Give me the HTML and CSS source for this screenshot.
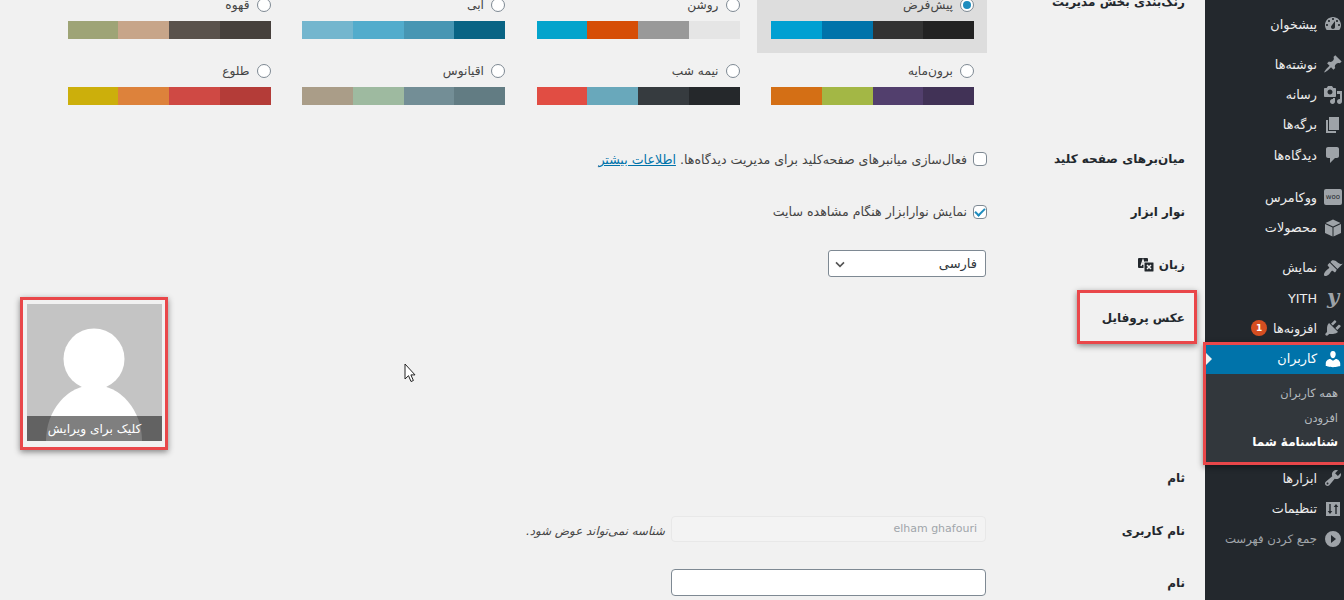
FILE: index.html
```html
<!DOCTYPE html>
<html lang="fa" dir="rtl">
	<head>
		<meta charset="UTF-8" />
		<meta name="viewport" content="width=device-width, initial-scale=1.0" />
		<title>شناسنامهٔ شما</title>
		<link rel="stylesheet" href="styles.css">
	</head>
	<body>
		<div class="admin">
			<nav class="sidebar">
				<a class="menu-item"><svg class="icon" viewBox="0 0 20 20"><path fill-rule="evenodd" d="M3.76 16h12.48c1.1-1.37 1.76-3.11 1.76-5 0-4.42-3.58-8-8-8s-8 3.580-8 8c0 1.89.66 3.63 1.76 5zM10 4c.55 0 1 .45 1 1s-.45 1-1 1-1-.45-1-1 .45-1 1-1zM6 6c.55 0 1 .45 1 1s-.45 1-1 1-1-.45-1-1 .45-1 1-1zm8 0c.55 0 1 .45 1 1s-.45 1-1 1-1-.45-1-1 .45-1 1-1zm-5.37 5.55L12 7v6c0 1.1-.9 2-2 2s-2-.9-2-2c0-.57.24-1.08.63-1.45zM4 10c.55 0 1 .45 1 1s-.45 1-1 1-1-.45-1-1 .45-1 1-1zm12 0c.55 0 1 .45 1 1s-.45 1-1 1-1-.45-1-1 .45-1 1-1z"/></svg><span>پیشخوان</span></a>

				<a class="menu-item group-start"><svg class="icon" viewBox="0 0 20 20"><path d="M10.44 3.02l1.82-1.82 6.36 6.35-1.83 1.82c-1.05-.68-2.48-.57-3.41.36l-.75.75c-.92.93-1.04 2.35-.35 3.41l-1.83 1.82-2.41-2.41-2.8 2.79c-.42.42-3.38 2.71-3.8 2.29s1.86-3.39 2.28-3.81l2.79-2.79L4.1 9.36l1.83-1.82c1.05.69 2.48.57 3.4-.36l.75-.75c.93-.92 1.05-2.35.36-3.41z"/></svg><span>نوشته‌ها</span></a>
				<a class="menu-item"><svg class="icon" viewBox="0 0 20 20"><path fill-rule="evenodd" d="M13 11V4c0-.55-.45-1-1-1h-1.67L9 1H5L3.67 3H2c-.55 0-1 .45-1 1v7c0 .55.45 1 1 1h10c.55 0 1-.45 1-1zM7 4.500c1.38 0 2.500 1.120 2.500 2.500S8.380 9.500 7 9.500 4.500 8.380 4.500 7 5.620 4.500 7 4.500zM14 6h5v10.500c0 1.380-1.120 2.500-2.500 2.500S14 17.880 14 16.500s1.120-2.500 2.500-2.500c.17 0 .34.02.5.05V9h-3V6zm-4 8.050V13h2v3.500c0 1.380-1.120 2.500-2.500 2.500S7 17.880 7 16.500 8.120 14 9.500 14c.17 0 .34.02.5.05z"/></svg><span>رسانه</span></a>
				<a class="menu-item"><svg class="icon" viewBox="0 0 20 20"><path d="M6 15V2h10v13H6zm-1 1h8v2H3V5h2v11z"/></svg><span>برگه‌ها</span></a>
				<a class="menu-item"><svg class="icon" viewBox="0 0 20 20"><path d="M5 2h9c1.100 0 2 .9 2 2v7c0 1.100-.9 2-2 2h-2l-5 5v-5H5c-1.100 0-2-.9-2-2V4c0-1.100.9-2 2-2z"/></svg><span>دیدگاه‌ها</span></a>

				<a class="menu-item group-wide"><span class="icon woo-icon">woo</span><span>ووکامرس</span></a>
				<a class="menu-item"><svg class="icon" viewBox="0 0 20 20"><path d="M10 1.500L2.500 5 10 8.500 17.500 5z"/><path d="M2 6v9l7.500 3.500v-9z"/><path d="M18 6v9l-7.500 3.500v-9z"/></svg><span>محصولات</span></a>

				<a class="menu-item group-start"><svg class="icon" viewBox="0 0 20 20"><path d="M14.480 11.060L7.410 3.990l1.500-1.500c.5-.56 2.300-.47 3.510.32 1.210.8 1.430 1.280 2.910 2.100 1.180.64 2.450 1.260 4.450.85zm-.71.71L6.700 4.700 4.930 6.470c-.39.39-.39 1.020 0 1.410l1.060 1.060c.39.39.39 1.030 0 1.420-.6.6-1.430 1.110-2.210 1.690-.35.26-.7.53-1.010.84-1.430 1.430-2.400 3.800-1.450 4.750.95.95 3.320-.02 4.750-1.450.31-.31.58-.66.84-1.010.58-.78 1.090-1.610 1.690-2.210.39-.39 1.030-.39 1.420 0l1.060 1.060c.39.39 1.020.39 1.410 0z"/></svg><span>نمایش</span></a>
				<a class="menu-item"><span class="icon yith-icon">y</span><span>YITH</span></a>
				<a class="menu-item"><svg class="icon" viewBox="0 0 20 20"><path d="M13.110 4.360L9.870 7.600 8 5.730l3.240-3.240c.35-.34 1.050-.2 1.560.32.52.51.66 1.210.31 1.550zm-8 1.770l.91-1.120 9.010 9.010-1.190.84c-.71.71-2.630 1.160-3.820 1.160H6.140L4.900 17.260c-.59.59-1.540.59-2.120 0-.59-.58-.59-1.530 0-2.120l1.240-1.240v-3.880c0-1.130.4-3.190 1.090-3.890zm7.260 3.970l3.240-3.240c.34-.35 1.040-.21 1.550.31.52.51.66 1.210.31 1.550l-3.240 3.250z"/></svg><span>افزونه‌ها</span><span class="badge">1</span></a>
				<a class="menu-item active"><svg class="icon" viewBox="0 0 20 20"><path d="M10 9.250c-2.270 0-2.730-3.440-2.730-3.440C7 4.020 7.820 2 9.970 2c2.160 0 2.980 2.020 2.710 3.810 0 0-.41 3.440-2.680 3.440zm0 2.570L12.720 10c2.390 0 4.520 2.330 4.520 4.530v2.490s-3.650 1.130-7.240 1.130c-3.650 0-7.240-1.130-7.240-1.130v-2.490c0-2.250 1.940-4.480 4.470-4.480z"/></svg><span>کاربران</span></a>
				<div class="submenu">
					<a>همه کاربران</a>
					<a>افزودن</a>
					<a class="current">شناسنامهٔ شما</a>
				</div>
				<a class="menu-item"><svg class="icon" viewBox="0 0 20 20"><path fill-rule="evenodd" d="M16.680 9.770c-1.340 1.340-3.300 1.670-4.950.99l-5.410 6.520c-.99.99-2.590.99-3.580 0s-.99-2.590 0-3.570l6.520-5.420c-.68-1.650-.35-3.610.99-4.950 1.280-1.280 3.120-1.620 4.720-1.060l-2.890 2.890 2.820 2.820 2.860-2.870c.53 1.580.18 3.390-1.080 4.650zM3.810 16.210c.4.39 1.040.39 1.430 0 .4-.4.4-1.040 0-1.430-.39-.4-1.030-.4-1.430 0-.39.39-.39 1.030 0 1.430z"/></svg><span>ابزارها</span></a>
				<a class="menu-item"><svg class="icon" viewBox="0 0 20 20"><path fill-rule="evenodd" d="M3 3h14v14H3zM6.300 5h1.400v7h1.600L7 15l-2.300-3h1.600zM12.300 15h1.400V8h1.600L13 5l-2.300 3h1.600z"/></svg><span>تنظیمات</span></a>
				<a class="menu-item collapse"><svg class="icon" viewBox="0 0 20 20"><path fill-rule="evenodd" d="M10 2a8 8 0 1 0 0 16 8 8 0 0 0 0-16zM8 6l5 4-5 4z"/></svg><span>جمع کردن فهرست</span></a>
			</nav>

			<main class="content">
				<div class="form-row color-row">
					<div class="row-label">رنگ‌بندی بخش مدیریت</div>
					<div class="row-field">
						<div class="color-grid">
							<label class="scheme selected">
								<span class="scheme-name"><input type="radio" name="scheme" checked />پیش‌فرض</span>
								<span class="swatches"><i class="c-1a"></i><i class="c-1b"></i><i class="c-1c"></i><i class="c-1d"></i></span>
							</label>
							<label class="scheme">
								<span class="scheme-name"><input type="radio" name="scheme" />روشن</span>
								<span class="swatches"><i class="c-2a"></i><i class="c-2b"></i><i class="c-2c"></i><i class="c-2d"></i></span>
							</label>
							<label class="scheme">
								<span class="scheme-name"><input type="radio" name="scheme" />آبی</span>
								<span class="swatches"><i class="c-3a"></i><i class="c-3b"></i><i class="c-3c"></i><i class="c-3d"></i></span>
							</label>
							<label class="scheme">
								<span class="scheme-name"><input type="radio" name="scheme" />قهوه</span>
								<span class="swatches"><i class="c-4a"></i><i class="c-4b"></i><i class="c-4c"></i><i class="c-4d"></i></span>
							</label>
							<label class="scheme">
								<span class="scheme-name"><input type="radio" name="scheme" />برون‌مایه</span>
								<span class="swatches"><i class="c-5a"></i><i class="c-5b"></i><i class="c-5c"></i><i class="c-5d"></i></span>
							</label>
							<label class="scheme">
								<span class="scheme-name"><input type="radio" name="scheme" />نیمه شب</span>
								<span class="swatches"><i class="c-6a"></i><i class="c-6b"></i><i class="c-6c"></i><i class="c-6d"></i></span>
							</label>
							<label class="scheme">
								<span class="scheme-name"><input type="radio" name="scheme" />اقیانوس</span>
								<span class="swatches"><i class="c-7a"></i><i class="c-7b"></i><i class="c-7c"></i><i class="c-7d"></i></span>
							</label>
							<label class="scheme">
								<span class="scheme-name"><input type="radio" name="scheme" />طلوع</span>
								<span class="swatches"><i class="c-8a"></i><i class="c-8b"></i><i class="c-8c"></i><i class="c-8d"></i></span>
							</label>
						</div>
					</div>
				</div>

				<div class="form-row">
					<div class="row-label">میان‌برهای صفحه کلید</div>
					<div class="row-field">
						<label class="check"><input type="checkbox" /><span>فعال‌سازی میانبرهای صفحه‌کلید برای مدیریت دیدگاه‌ها. <a href="#">اطلاعات بیشتر</a></span></label>
					</div>
				</div>

				<div class="form-row">
					<div class="row-label">نوار ابزار</div>
					<div class="row-field">
						<label class="check"><input type="checkbox" checked /><span>نمایش نوارابزار هنگام مشاهده سایت</span></label>
					</div>
				</div>

				<div class="form-row">
					<div class="row-label">زبان
						<svg class="lang-icon" viewBox="0 0 16 16">
							<rect x="0" y="1" width="10" height="10" rx="1" fill="#23282d" />
							<path d="M3 9l2-6 2 6M3.800 7h2.400" fill="none" stroke="#f1f1f1" stroke-width="1.300" />
							<rect x="6" y="5" width="10" height="10" rx="1" fill="#23282d" stroke="#f1f1f1" stroke-width="1" />
							<path d="M9 8l4 4M13 8l-4 4" stroke="#f1f1f1" stroke-width="1.500" />
						</svg>
					</div>
					<div class="row-field">
						<select class="lang-select"><option>فارسی</option></select>
					</div>
				</div>

				<div class="form-row profile-row">
					<div class="row-label">عکس پروفایل</div>
					<div class="row-field">
						<div class="avatar">
							<svg class="avatar-art" viewBox="0 0 135 137">
								<circle cx="67" cy="55" r="30.500" fill="#fff" />
								<ellipse cx="67" cy="137" rx="48" ry="56" fill="#fff" />
							</svg>
							<div class="avatar-caption">کلیک برای ویرایش</div>
						</div>
					</div>
				</div>

				<div class="form-row">
					<div class="row-label name-label">ثام</div>
					<div class="row-field"></div>
				</div>

				<div class="form-row">
					<div class="row-label">نام کاربری</div>
					<div class="row-field">
						<input class="text-input" type="text" value="elham ghafouri" disabled />
						<span class="field-note">شناسه نمی‌تواند عوض شود.</span>
					</div>
				</div>

				<div class="form-row">
					<div class="row-label">نام</div>
					<div class="row-field">
						<input class="text-input" type="text" />
					</div>
				</div>
			</main>
		</div>

		<!-- annotations drawn on top of the screenshot -->
		<div class="mark mark-label"></div>
		<div class="mark mark-avatar"></div>
		<div class="mark mark-menu"></div>
		<svg class="cursor" viewBox="0 0 12 20"><path d="M1 1v15l3.500-3.300 2.500 5.800 2.400-1-2.500-5.600H11z" fill="#fff" stroke="#222" stroke-width="1" /></svg>
	</body>
</html>
```

FILE: styles.css
```css
body {
	margin: 0;
	height: 600px;
	overflow: hidden;
	background-color: #f1f1f1;
	font-family: "DejaVu Sans", sans-serif;
	font-size: 12px;
	color: #444;
}

.admin {
	display: flex;
	height: 600px;
}

/* sidebar */
.sidebar {
	width: 139px;
	flex-shrink: 0;
	box-sizing: border-box;
	padding-top: 9px;
	background-color: #23282d;
}

.menu-item {
	display: flex;
	align-items: center;
	gap: 6px;
	height: 30.4px;
	padding-right: 1px;
	color: #eee;
	font-size: 12.8px;
	white-space: nowrap;
}

.group-start {
	margin-top: 9.6px;
}

.group-wide {
	margin-top: 11.6px;
}

.icon {
	flex-shrink: 0;
	width: 20px;
	height: 20px;
	fill: #9ea3a8;
}

.woo-icon {
	box-sizing: border-box;
	width: 18px;
	height: 16px;
	margin: 0 1px;
	border-radius: 2px;
	background-color: #9ea3a8;
	color: #23282d;
	font-size: 7px;
	line-height: 16px;
	text-align: center;
	direction: ltr;
}

.yith-icon {
	color: #9ea3a8;
	font-family: "DejaVu Serif", serif;
	font-size: 21px;
	font-weight: bold;
	font-style: italic;
	line-height: 18px;
	text-align: center;
	direction: ltr;
}

.badge {
	width: 16px;
	height: 16px;
	border-radius: 50%;
	background-color: #d54e21;
	color: #fff;
	font-size: 9px;
	font-weight: bold;
	line-height: 16px;
	text-align: center;
}

.active {
	position: relative;
	background-color: #0073aa;
	color: #fff;
}

.active .icon {
	fill: #fff;
}

.active::after {
	content: "";
	position: absolute;
	left: 0;
	top: 8px;
	border-style: solid;
	border-width: 7px 0 7px 7px;
	border-color: transparent transparent transparent #f1f1f1;
}

.submenu {
	display: flex;
	flex-direction: column;
	box-sizing: border-box;
	height: 89px;
	padding: 7px 6px 0 0;
	background-color: #32373c;
	color: #b4b9be;
	font-size: 11.4px;
}

.submenu a {
	height: 24.5px;
	line-height: 24.5px;
	white-space: nowrap;
}

.submenu .current {
	color: #fff;
	font-size: 12px;
	font-weight: bold;
}

.collapse {
	color: #a0a5aa;
	font-size: 11.7px;
}

/* form */
.content {
	flex: 1;
	box-sizing: border-box;
	margin-top: -10px;
	padding: 0 20px 0 27px;
}

.form-row {
	display: flex;
	min-height: 52.67px;
	align-items: center;
}

.row-label {
	width: 198px;
	flex-shrink: 0;
	color: #23282d;
	font-size: 12px;
	font-weight: bold;
	display: flex;
	align-items: center;
	gap: 5px;
}

.row-field {
	flex: 1;
	display: flex;
	align-items: center;
	gap: 6px;
}

.color-row {
	height: 143px;
	align-items: flex-start;
}

.color-row .row-label {
	padding-top: 5px;
}

.color-grid {
	display: grid;
	grid-template-columns: repeat(4, 230px);
	column-gap: 4.5px;
	row-gap: 3px;
}

.scheme {
	box-sizing: border-box;
	height: 63px;
	padding: 7px 13px 14px 14px;
}

.scheme.selected {
	background-color: #dddddd;
}

.scheme-name {
	display: flex;
	align-items: center;
	gap: 7px;
	height: 16px;
	margin-bottom: 8px;
	font-size: 12.2px;
}

.swatches {
	display: flex;
	height: 18px;
}

.swatches i {
	flex: 1;
}

input[type="radio"],
input[type="checkbox"] {
	appearance: none;
	box-sizing: border-box;
	width: 14px;
	height: 14px;
	margin: 0;
	flex-shrink: 0;
	border: 1px solid #7e8993;
	background-color: #fff;
}

input[type="radio"] {
	border-radius: 50%;
}

input[type="radio"]:checked::before {
	content: "";
	display: block;
	width: 8px;
	height: 8px;
	margin: 2px;
	border-radius: 50%;
	background-color: #1e8cbe;
}

input[type="checkbox"] {
	border-radius: 4px;
}

input[type="checkbox"]:checked::before {
	content: "";
	display: block;
	width: 4px;
	height: 8px;
	margin: 0 3.500px;
	border: solid #1e8cbe;
	border-width: 0 2.500px 2.500px 0;
	transform: rotate(45deg);
}

.check {
	display: flex;
	align-items: center;
	gap: 6px;
	font-size: 12.6px;
	white-space: nowrap;
}

.check a {
	color: #0073aa;
}

.lang-icon {
	width: 16px;
	height: 16px;
}

.lang-select {
	appearance: none;
	box-sizing: border-box;
	width: 158px;
	height: 27px;
	margin: 0 1px 2px 0;
	padding: 0 8px 0 24px;
	border: 1px solid #7e8993;
	border-radius: 3px;
	background: #fff url("data:image/svg+xml,%3Csvg xmlns='http://www.w3.org/2000/svg' width='20' height='20'%3E%3Cpath d='M5 8l5 5 5-5' fill='none' stroke='%23555' stroke-width='2'/%3E%3C/svg%3E") no-repeat left 3px center / 16px;
	color: #32373c;
	font-family: inherit;
	font-size: 13px;
}

.profile-row {
	height: 160.700px;
	align-items: flex-start;
}

.profile-row .row-label {
	padding-top: 20px;
}

.profile-row .row-field {
	justify-content: flex-end;
	padding-top: 13px;
}

.avatar {
	position: relative;
	width: 135px;
	height: 137px;
	overflow: hidden;
	background-color: #c4c4c4;
}

.avatar-art {
	display: block;
	width: 100%;
	height: 100%;
}

.avatar-caption {
	position: absolute;
	left: 0;
	right: 0;
	bottom: 0;
	height: 25px;
	background-color: rgba(0, 0, 0, 0.5);
	color: #fff;
	font-size: 12.2px;
	line-height: 26px;
	text-align: center;
}

.text-input {
	box-sizing: border-box;
	width: 315px;
	height: 27px;
	margin: 0 1px 2px 0;
	padding: 0 8px;
	border: 1px solid #7e8993;
	border-radius: 4px;
	background-color: #fff;
	font-family: inherit;
	font-size: 11px;
}

.text-input:disabled {
	height: 26px;
	margin-bottom: 4px;
	border-color: #e8e8e8;
	background-color: #f3f3f3;
	color: #a0a5aa;
}

.field-note {
	font-size: 11.8px;
	font-style: italic;
	color: #444;
}

/* red annotation boxes over the page */
.mark {
	position: absolute;
	box-sizing: border-box;
	border: 3px solid #e9474a;
	box-shadow: 0 2px 6px rgba(0, 0, 0, 0.45);
}

.mark-label {
	left: 1077px;
	top: 290px;
	width: 120px;
	height: 54px;
}

.mark-avatar {
	left: 20px;
	top: 297px;
	width: 148px;
	height: 153px;
}

.mark-menu {
	left: 1203px;
	top: 342px;
	width: 144px;
	height: 123px;
}

.cursor {
	position: absolute;
	left: 404px;
	top: 363px;
	width: 12px;
	height: 20px;
}

/* colour schemes */
.c-1a { background-color: #222; }
.c-1b { background-color: #333; }
.c-1c { background-color: #0073aa; }
.c-1d { background-color: #00a0d2; }
.c-2a { background-color: #e5e5e5; }
.c-2b { background-color: #999; }
.c-2c { background-color: #d64e07; }
.c-2d { background-color: #04a4cc; }
.c-3a { background-color: #096484; }
.c-3b { background-color: #4796b3; }
.c-3c { background-color: #52accc; }
.c-3d { background-color: #74b6ce; }
.c-4a { background-color: #46403c; }
.c-4b { background-color: #59524c; }
.c-4c { background-color: #c7a589; }
.c-4d { background-color: #9ea476; }
.c-5a { background-color: #413256; }
.c-5b { background-color: #523f6d; }
.c-5c { background-color: #a3b745; }
.c-5d { background-color: #d46f15; }
.c-6a { background-color: #25282b; }
.c-6b { background-color: #363b3f; }
.c-6c { background-color: #69a8bb; }
.c-6d { background-color: #e14d43; }
.c-7a { background-color: #627c83; }
.c-7b { background-color: #738e96; }
.c-7c { background-color: #9ebaa0; }
.c-7d { background-color: #aa9d88; }
.c-8a { background-color: #b43c38; }
.c-8b { background-color: #cf4944; }
.c-8c { background-color: #dd823b; }
.c-8d { background-color: #ccaf0b; }
```
